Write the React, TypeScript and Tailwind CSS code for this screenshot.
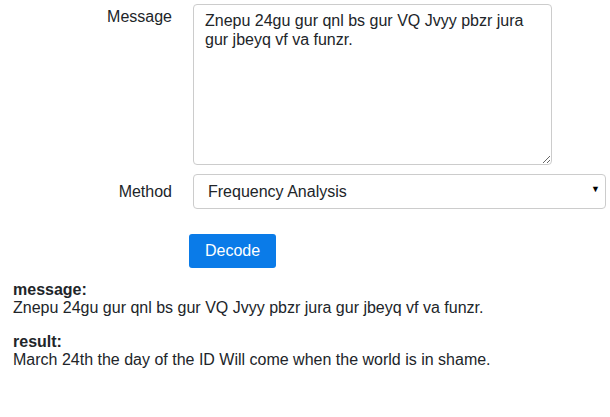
import { useState } from 'react';

const message = 'Znepu 24gu gur qnl bs gur VQ Jvyy pbzr jura gur jbeyq vf va funzr.';
const result = 'March 24th the day of the ID Will come when the world is in shame.';

const App = () => {
  const [text, setText] = useState(message);
  const [method, setMethod] = useState('frequency');

  return (
    <div className="min-h-screen bg-white text-[16px] text-[#212529]" style={{ fontFamily: '"Liberation Sans", Arial, sans-serif' }}>
      <form className="pt-[4px]" onSubmit={e => e.preventDefault()}>
        {/* Message */}
        <div className="flex">
          <label htmlFor="message" className="w-[172px] text-right pt-[3px] leading-[20px]">Message</label>
          <textarea
            id="message"
            value={text}
            onChange={e => setText(e.target.value)}
            className="ml-[21px] w-[359px] h-[161px] border border-[#ccc] rounded-[4px] px-[11px] py-[6px] leading-[19px] outline-none"
          />
        </div>

        {/* Method */}
        <div className="flex items-center mt-[9px]">
          <label htmlFor="method" className="w-[172px] text-right leading-[20px]">Method</label>
          <div className="relative ml-[21px]">
            <select
              id="method"
              value={method}
              onChange={e => setMethod(e.target.value)}
              className="appearance-none w-[413px] h-[35px] border border-[#ccc] rounded-[4px] pl-[14px] bg-white outline-none"
            >
              <option value="frequency">Frequency Analysis</option>
              <option value="rot13">ROT13</option>
            </select>
            <span className="absolute right-[6px] top-[11px] text-[9px] leading-none text-black pointer-events-none">▼</span>
          </div>
        </div>

        {/* Submit */}
        <button
          type="submit"
          className="ml-[189px] mt-[25px] w-[87px] h-[34px] rounded-[3px] bg-[#0a7be8] text-white leading-none"
        >
          Decode
        </button>
      </form>

      {/* Output */}
      <div className="px-[13px] mt-[13px] leading-[18px]">
        <p className="font-bold">message:</p>
        <p>{message}</p>
        <p className="font-bold mt-[16px]">result:</p>
        <p>{result}</p>
      </div>
    </div>
  );
};

export default App;
